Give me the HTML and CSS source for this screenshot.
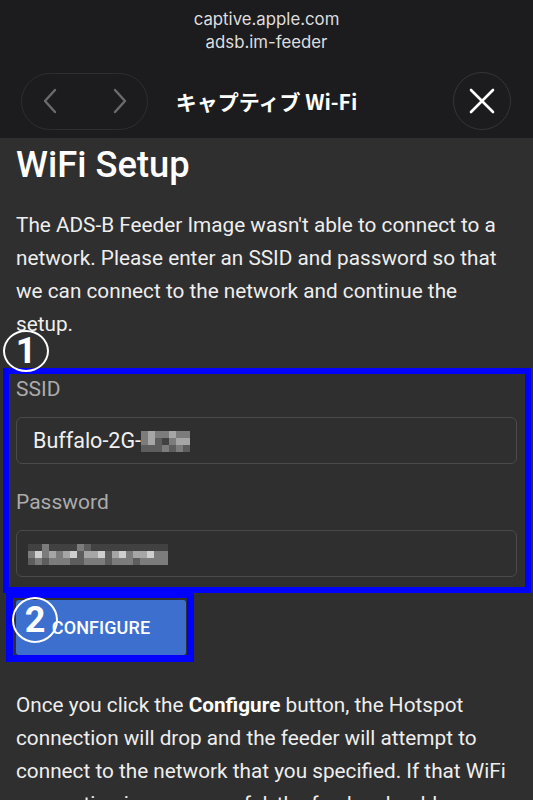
FILE: index.html
```html
<!DOCTYPE html>
<html lang="en">
<head>
<meta charset="utf-8">
<title>WiFi Setup</title>
<link rel="stylesheet" href="styles.css">
</head>
<body>
<header class="sheet-header">
  <div class="urls">
    <div class="url">captive.apple.com</div>
    <div class="url">adsb.im-feeder</div>
  </div>
  <div class="nav-row">
    <div class="nav-pill">
      <svg class="chev" width="14" height="26" viewBox="0 0 14 26"><path d="M12 2 L2 13 L12 24" fill="none" stroke="#6b6b6e" stroke-width="2.4" stroke-linecap="round" stroke-linejoin="round"/></svg>
      <svg class="chev" width="14" height="26" viewBox="0 0 14 26"><path d="M2 2 L12 13 L2 24" fill="none" stroke="#6b6b6e" stroke-width="2.4" stroke-linecap="round" stroke-linejoin="round"/></svg>
    </div>
    <div class="sheet-title">キャプティブ Wi-Fi</div>
    <div class="close-btn">
      <svg width="26" height="26" viewBox="0 0 26 26"><path d="M2 2 L24 24 M24 2 L2 24" fill="none" stroke="#ffffff" stroke-width="2.6" stroke-linecap="round"/></svg>
    </div>
  </div>
</header>

<main class="content">
  <h1 class="title">WiFi Setup</h1>
  <p class="text">The ADS-B Feeder Image wasn't able to connect to a network. Please enter an SSID and password so that we can connect to the network and continue the setup.</p>

  <div class="fields">
    <div class="mark mark-box1"></div>
    <div class="num num1">1</div>
    <label class="label">SSID</label>
    <div class="input">
      <span class="val">Buffalo-2G-</span>
      <span class="pix pix-ssid">
        <i class="g3"></i><i class="g2"></i><i class="g3"></i><i class="g3"></i><i class="g2"></i><i class="g3"></i><i class="g3"></i>
        <i class="g3"></i><i class="g2"></i><i class="g4"></i><i class="g5"></i><i class="g3"></i><i class="g2"></i><i class="g2"></i>
        <i class="g4"></i><i class="g4"></i><i class="g4"></i><i class="g3"></i><i class="g4"></i><i class="g3"></i><i class="g4"></i>
      </span>
    </div>
    <label class="label label-gap">Password</label>
    <div class="input">
      <span class="pix pix-pw">
        <i class="g5"></i><i class="g5"></i><i class="g3"></i><i class="g5"></i><i class="g5"></i><i class="g5"></i><i class="g5"></i><i class="g3"></i><i class="g4"></i><i class="g5"></i><i class="g5"></i><i class="g5"></i><i class="g5"></i><i class="g5"></i><i class="g5"></i><i class="g5"></i><i class="g5"></i><i class="g5"></i><i class="g5"></i><i class="g5"></i>
        <i class="g3"></i><i class="g1"></i><i class="g3"></i><i class="g2"></i><i class="g3"></i><i class="g2"></i><i class="g1"></i><i class="g4"></i><i class="g2"></i><i class="g2"></i><i class="g1"></i><i class="g4"></i><i class="g2"></i><i class="g1"></i><i class="g3"></i><i class="g2"></i><i class="g2"></i><i class="g1"></i><i class="g3"></i><i class="g3"></i>
        <i class="g4"></i><i class="g3"></i><i class="g4"></i><i class="g3"></i><i class="g3"></i><i class="g3"></i><i class="g4"></i><i class="g4"></i><i class="g3"></i><i class="g3"></i><i class="g3"></i><i class="g4"></i><i class="g3"></i><i class="g3"></i><i class="g3"></i><i class="g4"></i><i class="g3"></i><i class="g3"></i><i class="g3"></i><i class="g3"></i>
      </span>
    </div>
  </div>

  <div class="actions">
    <div class="btn-wrap">
      <div class="mark mark-box2"></div>
      <button class="btn">CONFIGURE</button>
      <div class="num num2">2</div>
    </div>
  </div>

  <p class="text text-after">Once you click the <b>Configure</b> button, the Hotspot connection will drop and the feeder will attempt to connect to the network that you specified. If that WiFi connection is unsuccessful, the feeder should become available again as a hotspot so that you can try again.</p>
</main>
</body>
</html>
```

FILE: styles.css
```css
* { box-sizing: border-box; }

html, body {
  margin: 0;
  padding: 0;
  background: #2f2f2f;
}

body {
  font-family: Roboto, "Noto Sans", sans-serif;
  color: #ececec;
}

/* ---------- iOS sheet header ---------- */
.sheet-header {
  background: #1c1c1e;
  height: 138px;
  padding-top: 8px;
}

.urls {
  display: flex;
  flex-direction: column;
  align-items: center;
  font-family: Inter, "Noto Sans", sans-serif;
  font-size: 16.8px;
  line-height: 23px;
  color: #dedede;
}

.nav-row {
  margin-top: 18px;
  padding: 0 21px;
  display: grid;
  grid-template-columns: 1fr auto 1fr;
  align-items: center;
  height: 58px;
}

.nav-pill {
  justify-self: start;
  width: 127px;
  height: 57px;
  border: 1px solid #2e2e31;
  border-radius: 29px;
  display: flex;
  align-items: center;
  justify-content: space-between;
  padding: 0 20px 0 21px;
}

.sheet-title {
  font-family: "Noto Sans CJK JP", Inter, sans-serif;
  font-weight: 700;
  font-size: 21px;
  color: #ffffff;
}

.close-btn {
  justify-self: end;
  width: 58px;
  height: 58px;
  border: 1px solid #353538;
  border-radius: 50%;
  display: flex;
  align-items: center;
  justify-content: center;
  margin-right: 1px;
}

/* ---------- page content ---------- */
.content {
  padding: 6px 16px 0;
}

.title {
  margin: 0;
  font-weight: 500;
  font-size: 36.3px;
  line-height: 42px;
  color: #ffffff;
}

.text {
  margin: 23px 2px 0 0;
  font-size: 20.75px;
  line-height: 33px;
  color: #eeeeee;
}

.text b { font-weight: 700; color: #ffffff; }

.fields {
  position: relative;
  margin-top: 34px;
  display: flex;
  flex-direction: column;
}

.label {
  display: block;
  font-size: 21px;
  line-height: 28px;
  color: #ababab;
}

.input {
  margin-top: 14px;
  height: 47px;
  border: 1px solid #4a4a4a;
  border-radius: 6px;
  display: flex;
  align-items: center;
  padding-left: 16px;
  font-size: 21.5px;
  color: #f0f0f0;
}

.label-gap { margin-top: 24px; }

.pix {
  display: grid;
  grid-auto-rows: 7px;
}
.pix i { display: block; }
.pix-ssid { grid-template-columns: repeat(7, 7px); margin-top: 2px; }
.pix-pw { grid-template-columns: repeat(20, 7px); margin-left: -5px; margin-top: 1px; }

.g1 { background: #cfcfcf; }
.g2 { background: #a6a6a6; }
.g3 { background: #7c7c7c; }
.g4 { background: #5d5d5d; }
.g5 { background: #414141; }

/* annotations */
.mark {
  position: absolute;
  border: 6px solid #0000ff;
  pointer-events: none;
}

.mark-box1 {
  top: -7px;
  left: -13px;
  right: -14px;
  bottom: -16px;
}

.num {
  position: absolute;
  width: 46px;
  height: 42px;
  border: 2px solid #ffffff;
  border-radius: 50%;
  color: #ffffff;
  font-family: Roboto, sans-serif;
  font-weight: 700;
  font-size: 36px;
  line-height: 38px;
  text-align: center;
}

.num1 { top: -45px; left: -13px; }

.actions {
  margin-top: 23px;
  display: flex;
}

.btn-wrap {
  position: relative;
}

.btn {
  display: block;
  width: 170px;
  height: 55px;
  border: none;
  border-radius: 3px;
  background: #3d70ce;
  color: #ffffff;
  font-family: Roboto, sans-serif;
  font-weight: 500;
  font-size: 18px;
  letter-spacing: 0.1px;
}

.mark-box2 {
  top: -9px;
  left: -10px;
  right: -8px;
  bottom: -7px;
  border-width: 7px;
}

.num2 { top: -3px; left: -4px; width: 46px; height: 46px; line-height: 42px; }

.text-after { margin-top: 34px; }
```
